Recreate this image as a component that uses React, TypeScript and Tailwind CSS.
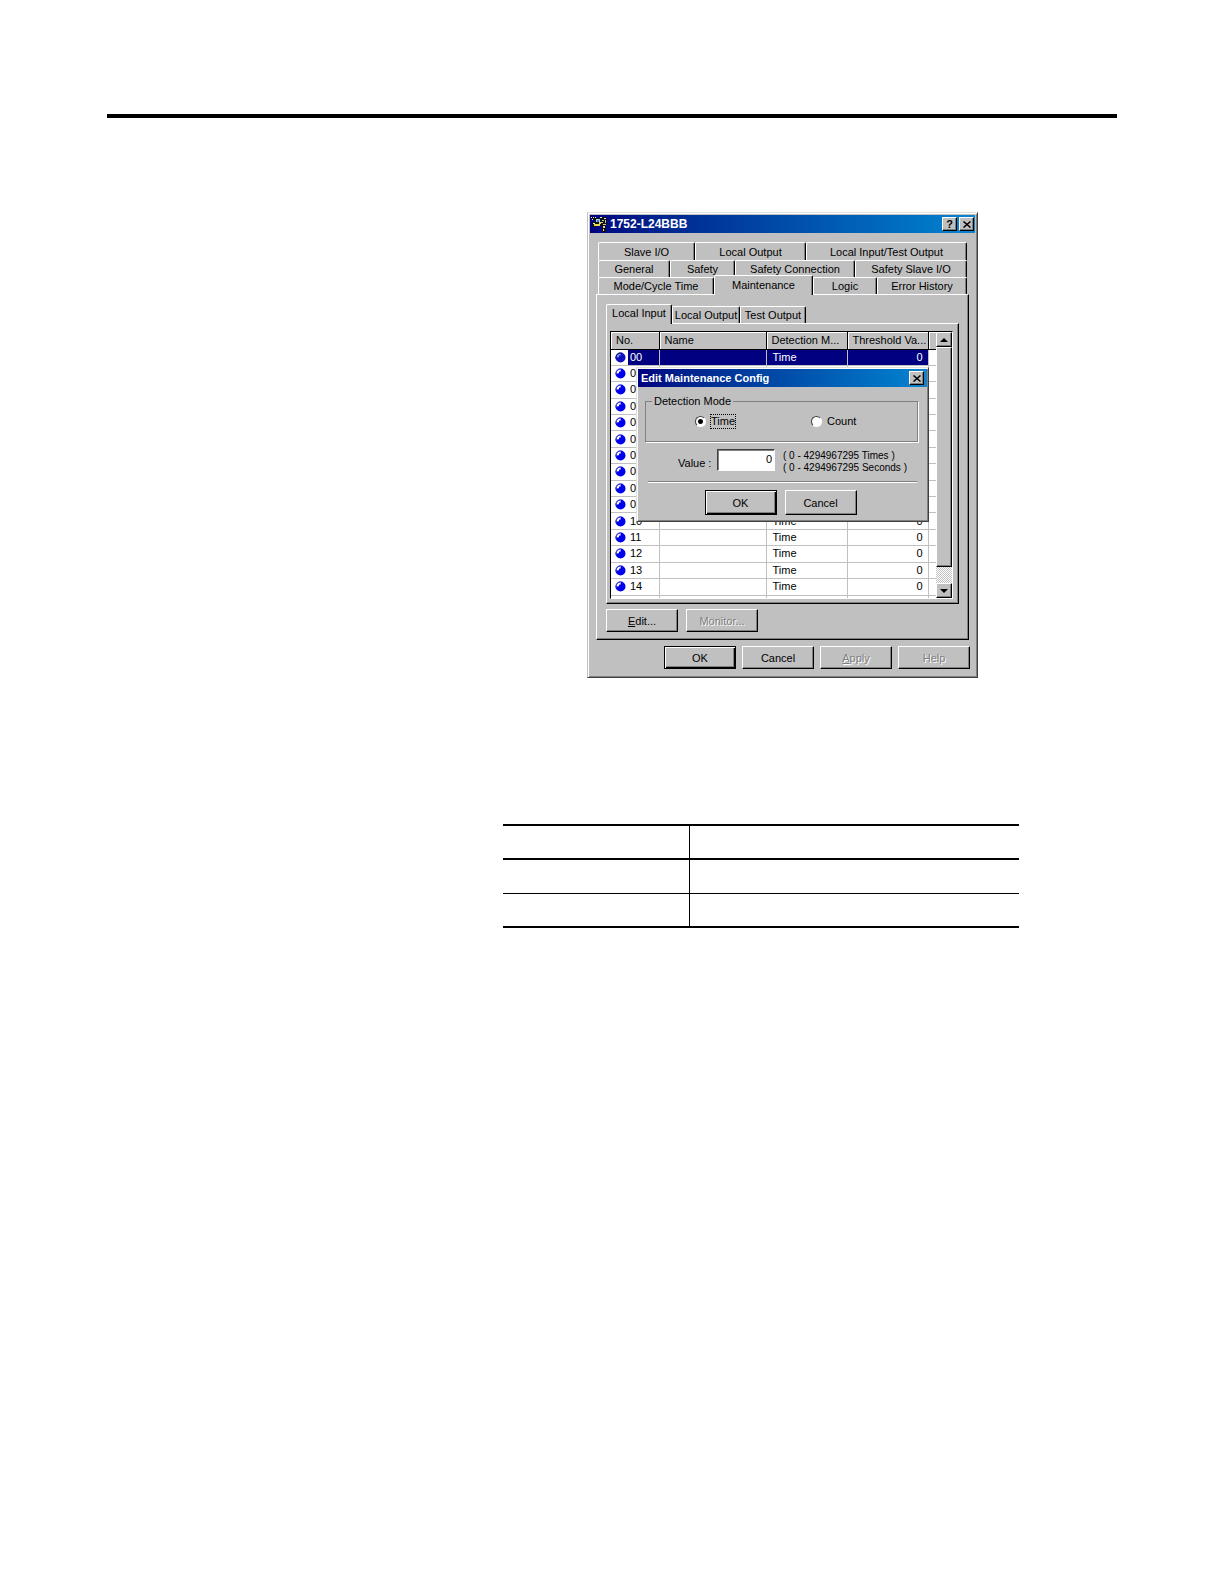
import React, { useState } from "react";

const raised =
  "border border-t-white border-l-white border-r-black border-b-black shadow-[inset_-1px_-1px_0_#808080]";

const rows = Array.from({ length: 15 }, (_, i) => String(i).padStart(2, "0"));

type TabProps = {
  label: string;
  className: string;
};

// Raised tab with a light left/top edge and a dark right edge
const Tab: React.FC<TabProps> = ({ label, className }) => (
  <button
    role="tab"
    className={`rounded-t-xs border-t border-l border-r border-t-white border-l-white border-r-black text-center whitespace-nowrap shadow-[inset_-1px_0_0_#808080] ${className}`}
  >
    {label}
  </button>
);

type PushButtonProps = {
  children: React.ReactNode;
  isDefault?: boolean;
  disabled?: boolean;
  className?: string;
};

const PushButton: React.FC<PushButtonProps> = ({
  children,
  isDefault,
  disabled,
  className = "h-[23px]",
}) => (
  <button
    disabled={disabled}
    className={`w-[72px] shrink-0 bg-[#c0c0c0] ${
      isDefault
        ? "border border-black shadow-[inset_1px_1px_0_#fff,inset_-1px_-1px_0_#000,inset_-2px_-2px_0_#808080]"
        : raised
    } ${disabled ? "text-[#808080] [text-shadow:1px_1px_0_#fff]" : "text-black"} ${className}`}
  >
    {children}
  </button>
);

const CaptionButton: React.FC<{ label: string; children: React.ReactNode }> = ({
  label,
  children,
}) => (
  <button
    aria-label={label}
    className={`flex h-[14px] w-[15px] items-center justify-center bg-[#c0c0c0] text-black ${raised}`}
  >
    {children}
  </button>
);

const CloseIcon = () => (
  <svg width="8" height="7" viewBox="0 0 8 7" stroke="#000" strokeWidth="1.5">
    <path d="M0.5 0.5 7.5 6.5M7.5 0.5 0.5 6.5" />
  </svg>
);

const AppIcon = () => (
  <svg width="17" height="17" viewBox="0 0 17 17" shapeRendering="crispEdges">
    <path
      d="M0 1h5v3H0zM4 2h7v8H4zM1 6h4v5H1zM9 1h6v2H9zM10 3h6v6h-6zM11 9h4v7h-4z"
      fill="#101010"
    />
    <path
      d="M0 1h1v1H0zM2 1h1v1H2zM4 1h1v1H4zM1 3h1v1H1zM9 1h2v1H9zM13 2h2v1h-2z"
      fill="#e8e8d8"
    />
    <path d="M5 3h4v3H5z" fill="#a8d0f0" />
    <path d="M6 4h2v2H6z" fill="#4070d0" />
    <path d="M3 8h6v2H3zM8 6h2v2H8z" fill="#e8d850" />
    <path d="M2 7h2v1H2z" fill="#e8e8d8" />
    <path d="M11 4h2v1h-2zM14 4h1v3h-1zM10 6h2v1h-2zM12 8h3v1h-3z" fill="#c8c8b0" />
    <path d="M12 10h2v2h-2zM12 13h1v2h-1z" fill="#d8d8a0" />
  </svg>
);

const Ball: React.FC<{ selected: boolean }> = ({ selected }) => (
  <svg width="11" height="11" viewBox="0 0 11 11" className="shrink-0">
    <circle cx="5.5" cy="5.5" r="5" fill={selected ? "#1010c0" : "#0000f0"} />
    <path
      d="M1.6 5.6C1.4 3.2 3.2 1.4 5.8 1.6L5.6 3.4 4.2 3.6 3.8 5.2Z"
      fill={selected ? "#7f8fe0" : "#fff"}
    />
    <path
      d="M1 7A5 5 0 0 1 6.5 0.8"
      fill="none"
      stroke={selected ? "#000080" : "#5050c0"}
      strokeWidth="0.8"
    />
  </svg>
);

const Arrow: React.FC<{ d: string }> = ({ d }) => (
  <svg width="8" height="4" viewBox="0 0 8 4">
    <path d={d} fill="#000" />
  </svg>
);

type RadioProps = {
  label: string;
  checked: boolean;
  onChange: () => void;
};

const Radio: React.FC<RadioProps> = ({ label, checked, onChange }) => (
  <label className="flex items-center gap-1">
    <input
      type="radio"
      name="detection-mode"
      checked={checked}
      onChange={onChange}
      className="size-[11px] appearance-none rounded-full border border-t-[#404040] border-l-[#404040] border-r-white border-b-white bg-white checked:bg-[radial-gradient(circle,#000_2px,#fff_3px)]"
    />
    <span
      className={`border border-dotted leading-[13px] ${
        checked ? "border-black" : "border-transparent"
      }`}
    >
      {label}
    </span>
  </label>
);

const MaintenanceTable = () => (
  <table className="h-[266px] w-[326px] table-fixed border-collapse bg-white leading-[13px]">
    <colgroup>
      <col className="w-[48px]" />
      <col className="w-[107px]" />
      <col className="w-[81px]" />
      <col className="w-[81px]" />
      <col />
    </colgroup>
    <thead>
      <tr className="h-[17px]">
        {["No.", "Name", "Detection M...", "Threshold Va...", ""].map((h) => (
          <th
            key={h}
            className="overflow-hidden border-r border-b border-black bg-[#c0c0c0] p-0 pl-[5px] text-left font-normal whitespace-nowrap shadow-[inset_1px_1px_0_#fff] last:border-r-0"
          >
            {h}
          </th>
        ))}
      </tr>
    </thead>
    <tbody>
      {rows.map((no, i) => {
        const selected = i === 0;
        const cell = selected
          ? "border-r border-b border-[#c0c0c0] bg-[#000080] text-white p-0"
          : "border-r border-b border-[#c0c0c0] p-0";
        return (
          <tr key={no}>
            <td className="border-r border-b border-[#c0c0c0] p-0">
              <div className="flex items-center pl-1">
                <Ball selected={selected} />
                <span
                  className={`ml-[2px] flex-1 pl-[2px] leading-[15px] ${
                    selected ? "bg-[#000080] text-white" : ""
                  }`}
                >
                  {no}
                </span>
              </div>
            </td>
            <td className={cell} />
            <td className={`${cell} pl-[6px]`}>Time</td>
            <td className={`${cell} pr-[5px] text-right`}>0</td>
            <td className="border-b border-[#c0c0c0] p-0" />
          </tr>
        );
      })}
      <tr className="h-[3px]">
        <td className="border-r border-[#c0c0c0] p-0" />
        <td className="border-r border-[#c0c0c0] p-0" />
        <td className="border-r border-[#c0c0c0] p-0" />
        <td className="border-r border-[#c0c0c0] p-0" />
        <td className="p-0" />
      </tr>
    </tbody>
  </table>
);

const ScrollBar = () => (
  <div className="flex w-[16px] flex-col bg-[repeating-conic-gradient(#fff_0_25%,#c0c0c0_0_50%)] bg-[length:2px_2px]">
    <button
      aria-label="Scroll up"
      className={`flex h-[15px] items-center justify-center bg-[#c0c0c0] ${raised}`}
    >
      <Arrow d="M0 4 4 0 8 4Z" />
    </button>
    <div className={`h-[220px] bg-[#c0c0c0] ${raised}`} />
    <button
      aria-label="Scroll down"
      className={`mt-auto flex h-[15px] items-center justify-center bg-[#c0c0c0] ${raised}`}
    >
      <Arrow d="M0 0 4 4 8 0Z" />
    </button>
  </div>
);

const EditDialog = () => {
  const [mode, setMode] = useState<"time" | "count">("time");
  const [value, setValue] = useState("0");

  return (
    <div
      role="dialog"
      aria-label="Edit Maintenance Config"
      className="absolute top-[154px] left-[48px] w-[293px] border border-t-[#e0e0e0] border-l-[#e0e0e0] border-r-[#404040] border-b-[#404040] bg-[#c0c0c0] p-px pb-[6px] shadow-[inset_1px_1px_0_#fff,inset_-1px_-1px_0_#808080]"
    >
      <div className="flex h-[18px] items-center bg-linear-to-r from-[#000080] to-[#1084d0] pr-[3px] pl-[3px] font-bold text-white">
        <span className="flex-1">Edit Maintenance Config</span>
        <CaptionButton label="Close">
          <CloseIcon />
        </CaptionButton>
      </div>
      <fieldset className="mr-[9px] ml-[7px] mt-[7px] h-[48px] border border-[#808080] px-[6px] shadow-[1px_1px_0_#fff]">
        <legend className="px-[2px] leading-[14px]">Detection Mode</legend>
        <div className="flex gap-[75px] pt-[6px] pl-[43px]">
          <Radio
            label="Time"
            checked={mode === "time"}
            onChange={() => setMode("time")}
          />
          <Radio
            label="Count"
            checked={mode === "count"}
            onChange={() => setMode("count")}
          />
        </div>
      </fieldset>
      <div className="mt-[7px] flex items-start pl-[40px]">
        <label htmlFor="threshold" className="w-[39px] pt-[7px]">
          Value :
        </label>
        <input
          id="threshold"
          value={value}
          onChange={(e) => setValue(e.target.value)}
          className="h-[22px] w-[58px] border border-t-[#404040] border-l-[#404040] border-r-white border-b-white bg-white pr-[2px] pb-[2px] text-right shadow-[inset_1px_1px_0_#808080]"
        />
        <div className="ml-2 pt-px text-[10px] leading-[12px] whitespace-nowrap">
          <p>( 0 - 4294967295 Times )</p>
          <p>( 0 - 4294967295 Seconds )</p>
        </div>
      </div>
      <hr className="mx-[10px] mt-[7px] border-t border-[#808080] shadow-[0_1px_0_#fff]" />
      <div className="mt-2 flex justify-center gap-2 pr-1">
        <PushButton isDefault className="h-[25px]">
          OK
        </PushButton>
        <PushButton className="h-[25px]">Cancel</PushButton>
      </div>
    </div>
  );
};

const PropertyWindow = () => (
  <section className="relative w-[391px] border border-t-[#e0e0e0] border-l-[#c0c0c0] border-r-[#404040] border-b-[#404040] bg-[#c0c0c0] p-[2px] pb-2 font-['Liberation_Sans',Arial,sans-serif] text-[11px] leading-[14px] text-black shadow-[inset_1px_1px_0_#fff,inset_-1px_-1px_0_#808080]">
    <header className="flex h-[18px] items-center gap-[2px] bg-linear-to-r from-[#000080] to-[#1084d0] px-px font-bold text-white">
      <AppIcon />
      <h1 className="flex-1 text-[12px]">1752-L24BBB</h1>
      <CaptionButton label="Help">?</CaptionButton>
      <CaptionButton label="Close">
        <CloseIcon />
      </CaptionButton>
    </header>

    <div className="mx-[6px] mt-[9px]">
      <div role="tablist" aria-label="Pages" className="px-[2px]">
        <div className="flex h-[18px]">
          <Tab label="Slave I/O" className="w-[97px]" />
          <Tab label="Local Output" className="w-[111px]" />
          <Tab label="Local Input/Test Output" className="flex-1" />
        </div>
        <div className="flex h-[17px]">
          <Tab label="General" className="w-[72px]" />
          <Tab label="Safety" className="w-[65px]" />
          <Tab label="Safety Connection" className="w-[120px]" />
          <Tab label="Safety Slave I/O" className="flex-1" />
        </div>
        <div className="flex h-[17px] items-end">
          <Tab label="Mode/Cycle Time" className="h-[17px] w-[116px]" />
          <Tab
            label="Maintenance"
            className="relative z-10 -mb-px h-[20px] w-[99px] bg-[#c0c0c0] pb-px"
          />
          <Tab label="Logic" className="h-[17px] w-[64px]" />
          <Tab label="Error History" className="h-[17px] flex-1" />
        </div>
      </div>

      <div className={`px-[9px] pt-[10px] pb-[7px] ${raised}`}>
        <div
          role="tablist"
          aria-label="Signals"
          className="flex h-[18px] items-end"
        >
          <Tab
            label="Local Input"
            className="relative z-10 -mb-px h-[20px] w-[66px] bg-[#c0c0c0] pb-[3px]"
          />
          <Tab label="Local Output" className="h-[17px] w-[68px]" />
          <Tab label="Test Output" className="h-[17px] w-[66px]" />
        </div>
        <div className={`pt-[7px] pr-[5px] pb-[4px] pl-[3px] ${raised}`}>
          <div className="flex h-[268px] overflow-hidden border border-t-black border-l-black border-r-white border-b-white bg-white">
            <MaintenanceTable />
            <ScrollBar />
          </div>
        </div>
        <div className="mt-[5px] flex gap-2">
          <PushButton>
            <u>E</u>dit...
          </PushButton>
          <PushButton disabled>Monitor...</PushButton>
        </div>
      </div>
    </div>

    <div className="mt-[6px] flex justify-end gap-[6px] pr-[5px]">
      <PushButton isDefault>OK</PushButton>
      <PushButton>Cancel</PushButton>
      <PushButton disabled>
        <u>A</u>pply
      </PushButton>
      <PushButton disabled>Help</PushButton>
    </div>

    <EditDialog />
  </section>
);

const RuledTable = () => (
  <table className="w-[516px] border-collapse border-y-2 border-black">
    <tbody>
      <tr className="h-[34px] border-b-2 border-black">
        <td className="w-[186px] border-r border-black" />
        <td />
      </tr>
      <tr className="h-[34px] border-b border-black">
        <td className="border-r border-black" />
        <td />
      </tr>
      <tr className="h-[34px]">
        <td className="border-r border-black" />
        <td />
      </tr>
    </tbody>
  </table>
);

const App = () => (
  <main className="min-h-screen bg-white px-[107px] pt-[114px]">
    <hr className="border-t-4 border-black" />
    <div className="mt-[94px] ml-[480px]">
      <PropertyWindow />
    </div>
    <div className="mt-[146px] ml-[396px]">
      <RuledTable />
    </div>
  </main>
);

export default App;
